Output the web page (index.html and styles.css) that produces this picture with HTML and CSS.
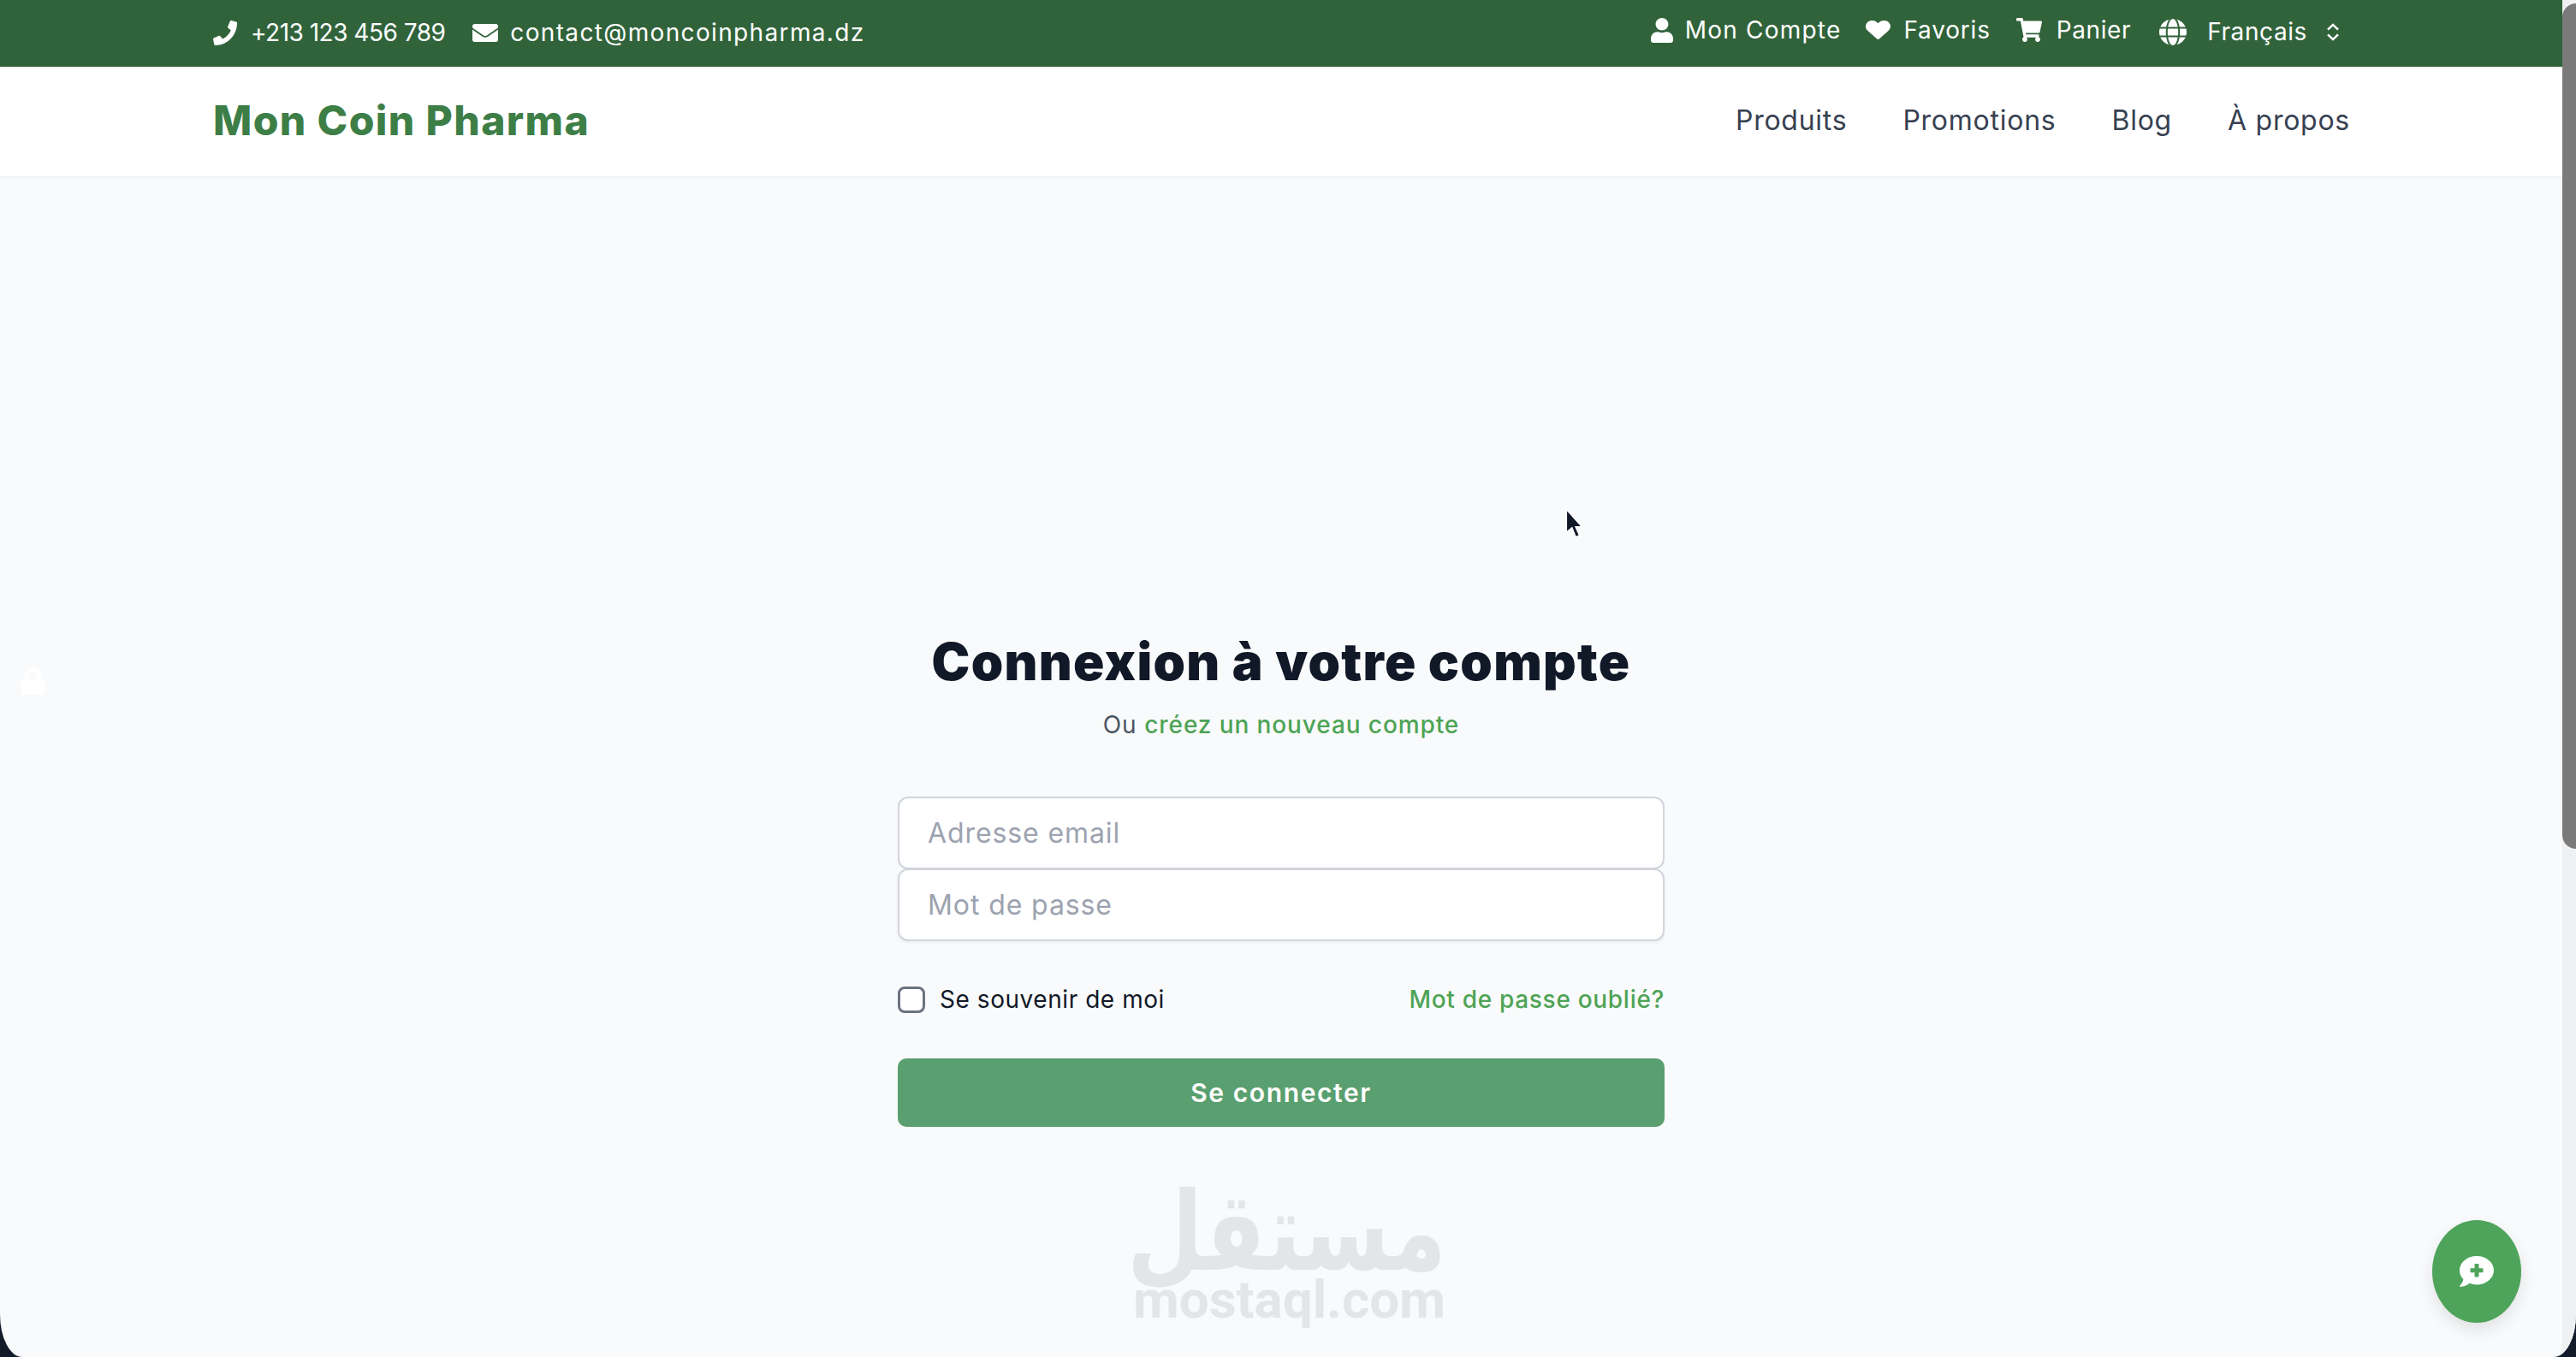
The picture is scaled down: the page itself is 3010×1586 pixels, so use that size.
FILE: index.html
```html
<!DOCTYPE html>
<html lang="fr">
<head>
  <meta charset="UTF-8" />
  <title>Mon Coin Pharma - Connexion</title>
  <link rel="stylesheet" href="styles.css">
</head>
<body>
  <div class="window">
    <div class="page">
      <div class="topbar">
        <div class="topbar-left">
          <svg class="ic ic-phone" viewBox="0 0 512 512" preserveAspectRatio="none"><path d="M493.4 24.6l-104-24c-11.3-2.6-22.9 3.3-27.5 13.9l-48 112c-4.2 9.8-1.4 21.3 6.9 28l60.6 49.6c-36 76.7-98.9 140.5-177.2 177.2l-49.6-60.6c-6.8-8.3-18.2-11.1-28-6.9l-112 48C3.9 366.5-2 378.1.6 389.4l24 104C27.1 504.2 36.7 512 48 512c256.1 0 464-207.5 464-464 0-11.2-7.7-20.9-18.6-23.4z"/></svg>
          <span class="t-phone">+213 123 456 789</span>
          <svg class="ic ic-mail" viewBox="0 64 512 384" preserveAspectRatio="none"><path d="M502.3 190.8c3.9-3.1 9.7-.2 9.7 4.7V400c0 26.5-21.5 48-48 48H48c-26.5 0-48-21.5-48-48V195.6c0-5 5.7-7.8 9.7-4.7 22.4 17.4 52.1 39.5 154.1 113.6 21.1 15.4 56.7 47.8 92.2 47.6 35.7.3 72-32.8 92.3-47.6 102-74.1 131.6-96.3 154-113.7zM256 320c23.2.4 56.6-29.2 73.4-41.4 132.7-96.3 142.8-104.7 173.4-128.7 5.8-4.5 9.2-11.5 9.2-18.9v-19c0-26.5-21.5-48-48-48H48C21.5 64 0 85.5 0 112v19c0 7.4 3.4 14.3 9.2 18.9 30.6 23.9 40.7 32.4 173.4 128.7 16.8 12.2 50.2 41.8 73.4 41.4z"/></svg>
          <span class="t-mail">contact@moncoinpharma.dz</span>
        </div>
        <div class="topbar-right">
          <svg class="ic ic-user" viewBox="0 0 448 512" preserveAspectRatio="none"><path d="M224 256c70.7 0 128-57.3 128-128S294.7 0 224 0 96 57.3 96 128s57.3 128 128 128zm89.6 32h-16.7c-22.2 10.2-46.9 16-72.9 16s-50.6-5.8-72.9-16h-16.7C60.2 288 0 348.2 0 422.4V464c0 26.5 21.5 48 48 48h352c26.5 0 48-21.5 48-48v-41.6c0-74.2-60.2-134.4-134.4-134.4z"/></svg>
          <span class="t-account">Mon Compte</span>
          <svg class="ic ic-heart" viewBox="0 32 512 448" preserveAspectRatio="none"><path d="M462.3 62.6C407.5 15.9 326 24.3 275.7 76.2L256 96.5l-19.7-20.3C186.1 24.3 104.5 15.9 49.7 62.6c-62.8 53.6-66.1 149.8-9.9 207.9l193.5 199.8c12.5 12.9 32.8 12.9 45.3 0l193.5-199.8c56.3-58.1 53-154.3-9.8-207.9z"/></svg>
          <span class="t-fav">Favoris</span>
          <svg class="ic ic-cart" viewBox="0 0 576 512" preserveAspectRatio="none"><path d="M528.12 301.319l47.273-208C578.806 78.301 567.391 64 551.99 64H159.208l-9.166-44.81C147.758 8.021 137.93 0 126.529 0H24C10.745 0 0 10.745 0 24v16c0 13.255 10.745 24 24 24h69.883l70.248 343.435C147.325 417.1 136 435.222 136 456c0 30.928 25.072 56 56 56s56-25.072 56-56c0-15.674-6.447-29.835-16.824-40h209.647C430.447 426.165 424 440.326 424 456c0 30.928 25.072 56 56 56s56-25.072 56-56c0-22.172-12.888-41.332-31.579-50.405l5.517-24.276c3.413-15.018-8.002-29.319-23.403-29.319H218.117l-6.545-32h293.145c11.206 0 20.92-7.754 23.403-18.681z"/></svg>
          <span class="t-cart">Panier</span>
          <svg class="ic ic-globe" viewBox="0 8 496 496" preserveAspectRatio="none"><path d="M336.5 160C322 70.7 287.8 8 248 8s-74 62.7-88.5 152h177zM152 256c0 22.2 1.2 43.5 3.3 64h185.3c2.1-20.5 3.3-41.8 3.3-64s-1.2-43.5-3.3-64H155.3c-2.1 20.5-3.3 41.8-3.3 64zm324.7-96c-28.6-67.9-86.5-120.4-158-141.6 24.4 33.8 41.2 84.7 50 141.6h108zM177.2 18.4C105.8 39.6 47.8 92.1 19.3 160h108c8.7-56.9 25.5-107.8 49.9-141.6zM487.4 192H372.7c2.1 21 3.3 42.5 3.3 64s-1.2 43-3.3 64h114.6c5.5-20.5 8.6-41.8 8.6-64s-3.1-43.5-8.5-64zM120 256c0-21.5 1.2-43 3.3-64H8.6C3.2 212.5 0 233.8 0 256s3.2 43.5 8.6 64h114.6c-2-21-3.2-42.5-3.2-64zm39.5 96c14.5 89.3 48.7 152 88.5 152s74-62.7 88.5-152h-177zm159.3 141.6c71.4-21.2 129.4-73.7 158-141.6h-108c-8.8 56.9-25.6 107.8-50 141.6zM19.3 352c28.6 67.9 86.5 120.4 158 141.6-24.4-33.8-41.2-84.7-50-141.6h-108z"/></svg>
          <span class="t-lang">Français</span>
          <svg class="ic-updown" viewBox="0 0 16 22" preserveAspectRatio="none"><path d="M2 8l6-6 6 6M2 14l6 6 6-6"/></svg>
        </div>
      </div>

      <nav class="mainnav">
        <a class="logo" href="#">Mon Coin Pharma</a>
        <div class="links">
          <a href="#">Produits</a>
          <a href="#">Promotions</a>
          <a href="#">Blog</a>
          <a href="#">À propos</a>
        </div>
      </nav>

      <main class="login">
        <h1>Connexion à votre compte</h1>
        <p class="sub">Ou <a href="#">créez un nouveau compte</a></p>
        <form class="login-form">
          <input class="field" type="email" placeholder="Adresse email" />
          <input class="field field-last" type="password" placeholder="Mot de passe" />
          <div class="row">
            <label class="remember"><span class="check"></span>Se souvenir de moi</label>
            <a class="forgot" href="#">Mot de passe oublié?</a>
          </div>
          <button class="submit" type="button">Se connecter</button>
        </form>
      </main>

      <svg class="side-lock" viewBox="0 0 448 512" preserveAspectRatio="none"><path d="M400 224h-24v-72C376 68.2 307.8 0 224 0S72 68.2 72 152v72H48c-26.5 0-48 21.5-48 48v192c0 26.5 21.5 48 48 48h352c26.5 0 48-21.5 48-48V272c0-26.5-21.5-48-48-48zm-104 0H152v-72c0-39.7 32.3-72 72-72s72 32.3 72 72v72z"/></svg>

      <svg class="cursor" viewBox="0 0 18 32"><path d="M1 1v25l6-5 4 10 4-2-4-9h7z"/></svg>

      <div class="watermark">
        <div class="wm-ar" lang="ar" dir="rtl">مستقل</div>
        <div class="wm-en">mostaql.com</div>
      </div>

      <button class="chat" type="button">
        <svg viewBox="0 32 512 448" preserveAspectRatio="none"><path d="M256 32C114.62 32 0 125.12 0 240c0 49.56 21.41 95 57 130.74C44.46 421.05 2.7 466 2.2 466.5A8 8 0 0 0 8 480c66.26 0 116-31.75 140.6-51.38A304.66 304.66 0 0 0 256 448c141.39 0 256-93.12 256-208S397.39 32 256 32zm96 232a8 8 0 0 1-8 8h-56v56a8 8 0 0 1-8 8h-48a8 8 0 0 1-8-8v-56h-56a8 8 0 0 1-8-8v-48a8 8 0 0 1 8-8h56v-56a8 8 0 0 1 8-8h48a8 8 0 0 1 8 8v56h56a8 8 0 0 1 8 8z"/></svg>
      </button>
    </div>
    <div class="scrollbar"><div class="thumb"></div></div>
  </div>
</body>
</html>
```

FILE: styles.css
```css
* { box-sizing: border-box; }
html, body { margin: 0; height: 100%; }
body { background: #141c2c; font-family: Inter, "Noto Sans", sans-serif; color: #111827; overflow: hidden; }
a { text-decoration: none; color: inherit; }

.window { display: flex; height: 1586px; overflow: hidden; background: #f9fafb; border-radius: 0 0 26px 26px / 0 0 50px 50px; }
.page { position: relative; flex: 1; min-width: 0; display: flex; flex-direction: column; }
.scrollbar { width: 16px; background: #eff0f1; padding-top: 4px; }
.thumb { height: 988px; background: #7a7a7a; border-radius: 16px 0 0 16px; }

/* top bar */
.topbar { height: 78px; background: #31633b; color: #fff; font-size: 28px; display: flex; justify-content: space-between; padding: 0 260px 0 249px; }
.topbar-left, .topbar-right { display: flex; align-items: center; }
.topbar-left { padding-bottom: 2px; }
.topbar-right { padding-bottom: 8px; }
.ic { fill: #fff; flex: none; }
.ic-phone { width: 28px; height: 29px; margin-right: 16px; }
.ic-mail { width: 30px; height: 21px; margin: 0 14px 0 32px; }
.ic-user { width: 26px; height: 29px; margin-right: 14px; }
.ic-heart { width: 29px; height: 22px; margin: 0 15px 0 29px; }
.ic-cart { width: 30px; height: 28px; margin: 0 17px 0 30px; }
.ic-globe { width: 32px; height: 31px; margin: 4px 24px 0 33px; }
.ic-updown { width: 16px; height: 21px; margin: 4px 0 0 22px; fill: none; stroke: #fff; stroke-width: 2.5; flex: none; }
.t-phone { letter-spacing: -0.5px; }
.t-mail { letter-spacing: 1.35px; }
.t-account { letter-spacing: 1.2px; }
.t-fav { letter-spacing: 0.8px; }
.t-cart { letter-spacing: 0.6px; }
.t-lang { letter-spacing: 0.6px; margin-top: 4px; }

/* nav */
.mainnav { height: 130px; background: #fff; border-bottom: 2px solid #f1f2f3; display: flex; align-items: center; justify-content: space-between; padding: 0 248px 3px 249px; }
.logo { font-size: 48px; font-weight: 800; color: #3d7e47; letter-spacing: 1.4px; }
.links { display: flex; gap: 65px; font-size: 32px; color: #374151; letter-spacing: 0.75px; }

/* login form */
.login { display: flex; flex-direction: column; align-items: center; padding-top: 529px; }
.login h1 { margin: 0; font-size: 60px; line-height: 72px; font-weight: 900; color: #111827; letter-spacing: 1.3px; }
.sub { margin: 18px 0 0; font-size: 28px; line-height: 40px; color: #4b5563; letter-spacing: 0.9px; }
.sub a { color: #4ea456; font-weight: 500; }
.login-form { width: 896px; margin-top: 64px; display: flex; flex-direction: column; }
.field { height: 85px; padding: 0 33px; background: #fff; border: 2px solid #d1d5db; border-radius: 12px; font: 32px Inter, sans-serif; letter-spacing: 0.9px; outline: none; }
.field::placeholder { color: #9ca3af; opacity: 1; }
.field-last { margin-top: -1px; box-shadow: 0 2px 4px rgba(0,0,0,0.05); }
.row { height: 36px; margin-top: 50px; display: flex; align-items: center; justify-content: space-between; font-size: 28px; }
.remember { display: flex; align-items: center; gap: 17px; letter-spacing: 0.55px; }
.check { width: 32px; height: 31px; background: #fff; border: 3px solid #6b7280; border-radius: 8px; }
.forgot { color: #4ea456; font-weight: 500; letter-spacing: 0.7px; }
.submit { height: 80px; margin-top: 51px; background: #5a9f6f; color: #fff; border: none; border-radius: 10px; font: 600 30px Inter, sans-serif; letter-spacing: 1.6px; }

/* things lying over the page */
.side-lock { position: absolute; left: 24px; top: 780px; width: 28px; height: 32px; fill: #fff; }
.cursor { position: absolute; left: 1829px; top: 594px; width: 20px; height: 35px; fill: #111827; stroke: #fff; stroke-width: 1.5; }
.watermark { position: absolute; left: 1324px; top: 1398px; width: 360px; color: #e4e5e6; text-align: center; }
.wm-ar { height: 84px; font: bold 102px/84px "DejaVu Sans", sans-serif; white-space: nowrap; transform: translateX(6px) scaleY(1.25); }
.wm-en { margin-top: 12px; font: 700 62px/50px Roboto, sans-serif; white-space: nowrap; }
.chat { position: absolute; left: 2842px; top: 1426px; width: 104px; height: 120px; padding: 0; border: none; border-radius: 50%; background: #4ea45a; box-shadow: 0 8px 18px rgba(0,0,0,0.1); display: flex; align-items: center; justify-content: center; }
.chat svg { width: 40px; height: 36px; fill: #fff; }
```
